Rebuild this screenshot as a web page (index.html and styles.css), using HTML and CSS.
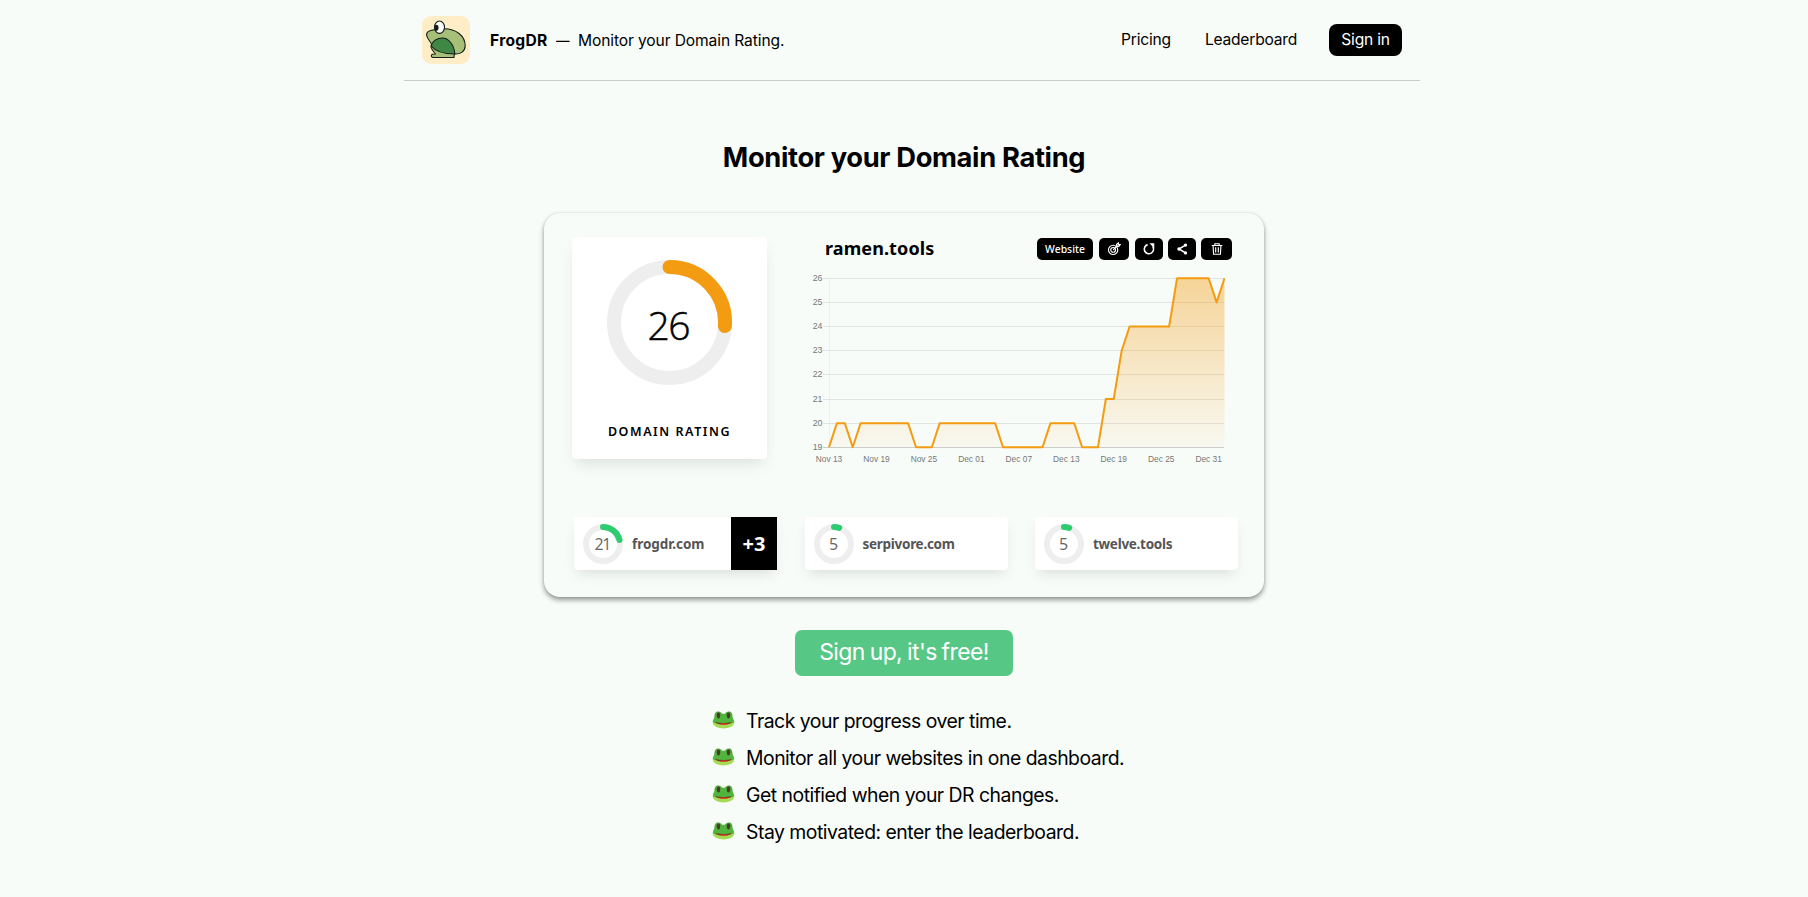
FILE: index.html
```html
<!DOCTYPE html>
<html lang="en">
<head>
<meta charset="utf-8">
<title>FrogDR</title>
<link rel="stylesheet" href="styles.css">
</head>
<body>
<svg width="0" height="0" class="defs">
  <symbol id="frog" viewBox="0 0 22 18">
    <path d="M2 8C1.500 2 3.500 .5 5.800 .5 8 .5 8.500 1.500 9.500 2.700h3C13.500 1.500 14 .5 16.200 .5 18.500 .5 20.500 2 20 8z" fill="#4ba93c"/>
    <ellipse cx="11" cy="11.500" rx="10.800" ry="6" fill="#a5dc55"/>
    <path d="M.3 11C.5 6 5 3 11 3s10.500 3 10.700 8c-3 2.500-17 3-21.400 0z" fill="#50b53c"/>
    <ellipse cx="6" cy="4.500" rx="1.700" ry="2.900" fill="#4a3a26"/>
    <ellipse cx="16" cy="4.500" rx="1.700" ry="2.900" fill="#4a3a26"/>
    <path d="M2.500 11q8.500 2 17 0-2 2.800-8.500 2.800t-8.500-2.800z" fill="#7d3a1b"/>
    <path d="M6.500 13q4.500-1 9 0-4.500 1.800-9 0z" fill="#e8412e"/>
  </symbol>
</svg>
<header class="header">
  <div class="brand">
    <svg class="logo" viewBox="0 0 48 48">
      <rect width="48" height="48" rx="9" fill="#ffedc8"/>
      <g stroke="#161d16" stroke-width="1.100" stroke-linejoin="round">
        <path d="M14 13.500C7 14 4 16 4.700 19.500c.5 3 3.300 5.500 4.800 8.500l-.5 3c.7 3 3 5 4.500 7l-3.500.3c-1 1.200-1 3.200 1.500 3.200h20.500l.3-3.500C39 38.500 43 35 43.200 30 43.400 20 34 12.300 21 12.700z" fill="#a6bf79"/>
        <path d="M9.200 30C10 25 15 22 20.500 22S32 28 32.800 38C24 38 14 36 9.200 30z" fill="#3f8744"/>
        <ellipse cx="17.500" cy="11.200" rx="5" ry="6.200" fill="#fff"/>
        <ellipse cx="14.500" cy="11.700" rx="1.500" ry="2.500" fill="#111"/>
      </g>
    </svg>
    <div class="tagline"><b class="name">FrogDR</b><span class="dash">—</span><span class="slogan">Monitor your Domain Rating.</span></div>
  </div>
  <nav class="nav"><a class="pricing">Pricing</a><a class="leader">Leaderboard</a><a class="signin">Sign in</a></nav>
</header>
<main class="main">
  <h1 class="title">Monitor your Domain Rating</h1>
  <section class="panel">
    <div class="top">
      <div class="rating">
        <svg class="ring" viewBox="0 0 125 125">
          <circle cx="62.500" cy="62.500" r="55.500" fill="none" stroke="#eee" stroke-width="14"/>
          <path d="M62.500 7A55.500 55.500 0 0 1 117.900 66" fill="none" stroke="#f39c12" stroke-width="14" stroke-linecap="round"/>
          <text x="62" y="80" text-anchor="middle" textLength="43" class="score">26</text>
        </svg>
        <div class="caption">DOMAIN RATING</div>
      </div>
      <div class="detail">
        <div class="bar">
          <div class="site">ramen.tools</div>
          <div class="tools">
            <span class="tool website">Website</span>
            <span class="tool w30"><svg viewBox="0 0 16 16"><g class="line"><circle cx="7" cy="9" r="5.300"/><circle cx="7" cy="9" r="2.700"/><path d="M7 9l5-5M11 5V2.500L13 1v2h2l-1.500 2z"/></g></svg></span>
            <span class="tool w28"><svg viewBox="0 0 16 16"><path class="line bold" d="M6.500 3A5.300 5.300 0 1 0 12.200 5"/><path d="M8.500 1.500h5.500v5.500z" fill="#fff"/></svg></span>
            <span class="tool w28"><svg viewBox="0 0 16 16"><path class="line bold" d="M12 3.500L4.500 8l7.500 4.500"/><g fill="#fff"><circle cx="12" cy="3.500" r="1.900"/><circle cx="4.500" cy="8" r="1.900"/><circle cx="12" cy="12.500" r="1.900"/></g></svg></span>
            <span class="tool w31"><svg viewBox="0 0 16 16"><path class="line" d="M2 4h12M5.500 4V2h5v2M3.500 4l.6 10h7.800L12.500 4M6.500 6v6M9.500 6v6"/></svg></span>
          </div>
        </div>
        <svg class="chart" viewBox="800 268 440 200" id="chart"></svg>
      </div>
    </div>
    <div class="sites">
      <div class="mini">
        <svg class="miniring" viewBox="0 0 40 40"><circle cx="20" cy="20" r="17"/><path d="M20 3A17 17 0 0 1 36.500 16"/><text x="20" y="26" text-anchor="middle" textLength="17">21</text></svg>
        <span class="domain">frogdr.com</span><span class="gain">+3</span>
      </div>
      <div class="mini">
        <svg class="miniring" viewBox="0 0 40 40"><circle cx="20" cy="20" r="17"/><path d="M20 3A17 17 0 0 1 25.200 3.900"/><text x="19.500" y="26" text-anchor="middle">5</text></svg>
        <span class="domain tight">serpivore.com</span>
      </div>
      <div class="mini">
        <svg class="miniring" viewBox="0 0 40 40"><circle cx="20" cy="20" r="17"/><path d="M20 3A17 17 0 0 1 25.200 3.900"/><text x="19.500" y="26" text-anchor="middle">5</text></svg>
        <span class="domain tight">twelve.tools</span>
      </div>
    </div>
  </section>
  <a class="cta">Sign up, it's free!</a>
  <ul class="features">
    <li><svg class="frog"><use href="#frog"/></svg><span>Track your progress over time.</span></li>
    <li><svg class="frog"><use href="#frog"/></svg><span>Monitor all your websites in one dashboard.</span></li>
    <li><svg class="frog"><use href="#frog"/></svg><span>Get notified when your DR changes.</span></li>
    <li><svg class="frog"><use href="#frog"/></svg><span>Stay motivated: enter the leaderboard.</span></li>
  </ul>
</main>
<script src="chart.js"></script>
</body>
</html>
```
FILE: styles.css
```css
* { box-sizing: border-box; }
body { margin: 0; background: #f8fcf9; color: #000; font-family: Inter, sans-serif; font-size: 15.600px; overflow: hidden; }
.defs { position: absolute; }
.header { width: 1016px; height: 81px; margin-left: 404px; padding: 0 18px; border-bottom: 1px solid #ccc; display: flex; justify-content: space-between; align-items: center; }
.brand { display: flex; align-items: center; gap: 20px; }
.logo { width: 48px; height: 48px; }
.tagline { display: flex; line-height: 20px; padding-top: 2px; white-space: nowrap; }
.name { width: 66px; letter-spacing: .3px; }
.dash { width: 22px; transform: scaleX(.87); transform-origin: left; }
.slogan { letter-spacing: -.120px; }
.nav { display: flex; align-items: center; letter-spacing: -.22px; line-height: 20px; }
.pricing { margin-right: 34px; padding-bottom: 1px; }
.leader { margin-right: 32px; padding-bottom: 1px; }
.signin { width: 73px; height: 32px; padding-bottom: 1px; border-radius: 8px; background: #000; color: #fff; display: flex; align-items: center; justify-content: center; }
.main { display: flex; flex-direction: column; align-items: center; }
.title { margin: 59px 0 0; height: 36px; line-height: 36px; font-size: 27.300px; font-weight: 700; letter-spacing: -.340px; white-space: nowrap; }
.panel { width: 720px; height: 384px; margin-top: 37px; padding: 24px 24px 0 28px; border-radius: 16px; box-shadow: 0 3px 5px rgba(0,0,0,.4), 0 0 2px rgba(0,0,0,.12); font-family: "Noto Sans", "Open Sans", sans-serif; }
.top { display: flex; height: 280px; }
.rating { flex: none; width: 195px; height: 222px; background: #fff; border-radius: 4px; box-shadow: 0 8px 14px -4px rgba(60,80,70,.16); display: flex; flex-direction: column; align-items: center; padding-top: 23px; }
.ring { width: 125px; height: 125px; }
.score { font-family: "Open Sans", sans-serif; font-size: 39px; font-weight: 300; fill: #000; stroke: #000; stroke-width: .5; }
.caption { margin-top: 38px; line-height: 18px; font-size: 12.500px; font-weight: 600; letter-spacing: 1.550px; white-space: nowrap; }
.detail { flex: none; margin-left: 33px; width: 440px; }
.bar { display: flex; justify-content: space-between; height: 31px; padding: 1px 8px 0 25px; }
.site { font-size: 18px; line-height: 21px; font-weight: 700; letter-spacing: .1px; }
.tools { display: flex; gap: 5px; }
.tool { height: 22px; border-radius: 5px; background: #000; color: #fff; display: flex; align-items: center; justify-content: center; }
.tool svg { width: 14px; height: 14px; }
.website { width: 56px; font-size: 10.400px; font-weight: 500; margin-right: 1px; }
.w30 { width: 30px; margin-right: 1px; }
.w28 { width: 28px; }
.w31 { width: 31px; }
.line { fill: none; stroke: #fff; stroke-width: 1.300; }
.bold { stroke-width: 1.800; }
.chart { width: 440px; height: 200px; display: block; font-family: "Liberation Sans", Arial, sans-serif; font-size: 8.800px; }
.chart text { fill: #777; }
.sites { display: flex; justify-content: space-between; margin-left: 2px; width: 664px; }
.mini { width: 203px; height: 53px; background: #fff; border-radius: 4px; box-shadow: 0 7px 12px -4px rgba(60,80,70,.17); display: flex; align-items: center; padding-left: 9px; }
.miniring { width: 40px; height: 40px; }
.miniring circle { fill: none; stroke: #eee; stroke-width: 6; }
.miniring path { fill: none; stroke: #2ecc71; stroke-width: 6; stroke-linecap: round; }
.miniring text { font-family: "Open Sans", sans-serif; font-size: 16px; fill: #666; }
.domain { margin-left: 9px; font-size: 13.500px; line-height: 20px; font-weight: 700; color: #555; letter-spacing: -.03px; }
.tight { letter-spacing: -.280px; }
.gain { margin-left: auto; width: 46px; height: 53px; line-height: 54px; background: #000; color: #fff; text-align: center; font-size: 20px; font-weight: 700; }
.cta { width: 218px; height: 46px; margin-top: 33px; border-radius: 7px; background: #57c785; color: #fff; font-size: 23px; line-height: 44px; text-align: center; letter-spacing: -.600px; word-spacing: -1px; white-space: nowrap; }
.features { list-style: none; margin: 26px 0 0 31px; padding: 0; width: 415px; font-size: 19.400px; letter-spacing: -.500px; }
.features li { display: flex; align-items: center; height: 37px; white-space: nowrap; }
.frog { flex: none; width: 23px; height: 18px; margin: 0 11px 1px 0; }
```
FILE: chart.js
```js
const values = [19,20,20,19,20,20,20,20,20,20,20,19,19,19,20,20,20,20,20,20,20,20,19,19,19,19,19,19,20,20,20,20,19,19,19,21,21,23,24,24,24,24,24,24,26,26,26,26,26,25,26];
const dates = ["Nov 13","Nov 19","Nov 25","Dec 01","Dec 07","Dec 13","Dec 19","Dec 25","Dec 31"];
const px = i => 829 + i * 7.91;
const py = v => 447.3 - (v - 19) * 24.15;
let out = '<defs><linearGradient id="fill" x1="0" y1="278" x2="0" y2="447" gradientUnits="userSpaceOnUse"><stop offset="0" stop-color="#f39c12" stop-opacity=".42"/><stop offset="1" stop-color="#f39c12" stop-opacity=".04"/></linearGradient></defs>';
out += '<path d="M829.5 278V447" stroke="#eeefee"/>';
for (let v = 19; v <= 26; v++) {
  const y = Math.floor(py(v)) + 0.5;
  out += `<path d="M823 ${y}H1224" stroke="${v === 19 ? '#ccc' : '#e1e5e2'}"/>`;
  out += `<text x="822.500" y="${y + 2.500}" text-anchor="end">${v}</text>`;
}
const line = values.map((v, i) => `${px(i)} ${py(v)}`).join('L');
out += `<path d="M829 447.3L${line}V447.3Z" fill="url(#fill)"/>`;
out += `<path d="M${line}" fill="none" stroke="#f39c12" stroke-width="2" stroke-linejoin="round"/>`;
dates.forEach((d, i) => {
  out += `<text x="${px(i * 6)}" y="462" text-anchor="middle" textLength="26.500" lengthAdjust="spacingAndGlyphs">${d}</text>`;
});
document.getElementById('chart').innerHTML = out;
```
